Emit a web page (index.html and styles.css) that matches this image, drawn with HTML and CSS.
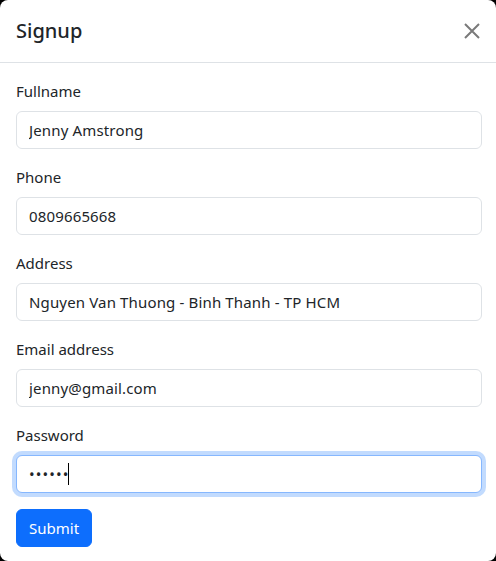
FILE: index.html
```html
<!DOCTYPE html>
<html lang="en">
<head>
<meta charset="utf-8">
<title>Signup</title>
<link rel="stylesheet" href="styles.css">
</head>
<body>
<div class="modal">
  <div class="modal-header">
    <h5 class="modal-title">Signup</h5>
    <button class="btn-close" type="button" aria-label="Close">
      <svg viewBox="0 0 16 16" width="16" height="16"><path d="M1 1L15 15M15 1L1 15" stroke="currentColor" stroke-width="2" fill="none"/></svg>
    </button>
  </div>
  <form class="modal-body">
    <div class="field">
      <label class="form-label">Fullname</label>
      <input class="form-control" type="text" value="Jenny Amstrong">
    </div>
    <div class="field">
      <label class="form-label">Phone</label>
      <input class="form-control" type="text" value="0809665668">
    </div>
    <div class="field">
      <label class="form-label">Address</label>
      <input class="form-control" type="text" value="Nguyen Van Thuong - Binh Thanh - TP HCM">
    </div>
    <div class="field">
      <label class="form-label">Email address</label>
      <input class="form-control" type="email" value="jenny@gmail.com">
    </div>
    <div class="field">
      <label class="form-label">Password</label>
      <div class="input-wrap">
        <input class="form-control focused pw" type="password" value="123456">
        <span class="caret"></span>
      </div>
    </div>
    <div>
      <button class="btn-primary" type="button">Submit</button>
    </div>
  </form>
</div>
</body>
</html>
```

FILE: styles.css
```css
html {
  background: #000;
  height: 100%;
}
body {
  margin: 0;
  height: 100%;
  font-family: "Noto Sans", "Open Sans", sans-serif;
  font-size: 16px;
  line-height: 24px;
  color: #212529;
}
.modal {
  background: #fff;
  border-radius: 8px;
  height: 100%;
  overflow: hidden;
}
.modal-header {
  height: 63px;
  box-sizing: border-box;
  border-bottom: 1px solid #dee2e6;
  display: flex;
  align-items: center;
  justify-content: space-between;
  padding: 0 14px 0 16px;
}
.modal-title {
  margin: 0;
  font-size: 20px;
  font-weight: 500;
  line-height: 30px;
}
.btn-close {
  border: 0;
  background: none;
  padding: 4px;
  width: 24px;
  height: 24px;
  color: #7a7a7a;
  display: flex;
  align-items: center;
  justify-content: center;
  margin-right: -2px;
}
.btn-close svg {
  width: 16px;
  height: 16px;
}
.modal-body {
  padding: 16px 14px 16px 16px;
  margin: 0;
}
.field {
  margin-bottom: 16px;
}
.form-label {
  display: block;
  margin-bottom: 8px;
  font-size: 15px;
}
.form-control {
  display: block;
  width: 100%;
  box-sizing: border-box;
  height: 38px;
  padding: 6px 12px;
  font-family: inherit;
  font-size: 15px;
  letter-spacing: 0.15px;
  line-height: 24px;
  color: #212529;
  background: #fff;
  border: 1px solid #dee2e6;
  border-radius: 6px;
  outline: none;
}
.form-control.pw {
  letter-spacing: 1.1px;
}
.form-control.focused {
  border-color: #86b7fe;
  box-shadow: 0 0 0 4px rgba(13, 110, 253, 0.25);
}
.input-wrap {
  position: relative;
}
.caret {
  position: absolute;
  left: 52px;
  top: 8px;
  width: 1px;
  height: 22px;
  background: #000;
}
.btn-primary {
  background: #0d6efd;
  color: #fff;
  border: 1px solid #0d6efd;
  border-radius: 6px;
  padding: 6px 12px;
  font-family: inherit;
  font-size: 15px;
  line-height: 24px;
}
```
